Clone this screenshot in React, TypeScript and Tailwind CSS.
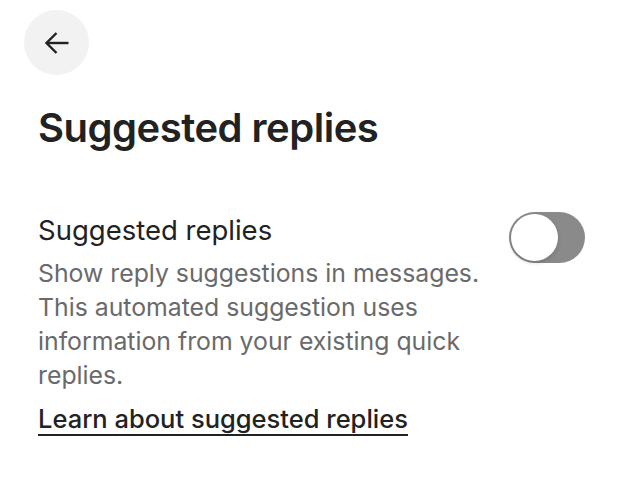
import React from 'react';

export default function App() {
  return (
    <div className="w-[623px] h-[499px] bg-white overflow-hidden" style={{ fontFamily: 'Inter, "Noto Sans", sans-serif' }}>
      <div className="pt-[10px] pl-[24px]">
        <button className="w-[65px] h-[65px] rounded-full bg-[#f2f2f2] flex items-center justify-center text-[#222222]">
          <svg width="26" height="26" viewBox="0 0 26 26" fill="none" stroke="currentColor" strokeWidth="2.4" strokeLinecap="butt" strokeLinejoin="miter">
            <path d="M24.5 13H2.5" />
            <path d="M12.5 3L2.5 13l10 10" />
          </svg>
        </button>
      </div>

      <h1 className="mt-[29px] pl-[38px] text-[40px] leading-[48px] font-semibold tracking-[-0.5px] text-[#222222]">
        Suggested replies
      </h1>

      <div className="mt-[61px] pl-[38px] pr-[38px] flex items-start justify-between">
        <div className="w-[452px]">
          <div className="text-[27.5px] leading-[34px] text-[#222222]">Suggested replies</div>
          <p className="mt-[9px] text-[24.8px] leading-[34px] text-[#6a6a6a]">
            Show reply suggestions in messages. This automated suggestion uses information from your existing quick replies.
          </p>
          <a href="#" className="mt-[10px] inline-block text-[25.5px] leading-[34px] font-medium text-[#222222] underline underline-offset-[6px] decoration-[2px] [text-decoration-skip-ink:none]">
            Learn about suggested replies
          </a>
        </div>
        <div className="mt-[-1px] w-[76px] h-[51px] rounded-full bg-[#8a8a8a] p-[2px] flex items-center shrink-0">
          <div className="w-[47px] h-[47px] rounded-full bg-white shadow-[0_2px_4px_rgba(0,0,0,0.15)]" />
        </div>
      </div>
    </div>
  );
}
